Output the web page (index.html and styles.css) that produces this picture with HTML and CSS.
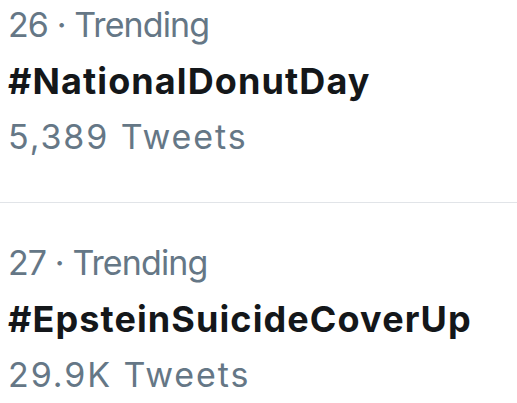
FILE: index.html
```html
<!DOCTYPE html>
<html>
<head>
<meta charset="utf-8">
<link rel="stylesheet" href="styles.css">
</head>
<body>
<div class="list">
  <div class="trend first">
    <div class="meta">26 · Trending</div>
    <div class="tag">#NationalDonutDay</div>
    <div class="count">5,389 Tweets</div>
  </div>
  <div class="divider"></div>
  <div class="trend">
    <div class="meta">27 · Trending</div>
    <div class="tag">#EpsteinSuicideCoverUp</div>
    <div class="count">29.9K Tweets</div>
  </div>
</div>
</body>
</html>
```
FILE: styles.css
```css
html, body {
  margin: 0;
  padding: 0;
  background: #ffffff;
}
body {
  font-family: Inter, "Liberation Sans", sans-serif;
  width: 517px;
  height: 403px;
  overflow: hidden;
}
.list {
  display: flex;
  flex-direction: column;
}
.trend {
  padding: 0 0 0 8px;
  display: flex;
  flex-direction: column;
}
.trend.first {
  margin-top: -3px;
}
.meta, .tag, .count {
  font-size: 34px;
  line-height: 56px;
  white-space: nowrap;
}
.meta {
  color: #657786;
  letter-spacing: -0.9px;
}
.count {
  color: #657786;
  letter-spacing: 1.9px;
}
.tag {
  color: #14171a;
  font-weight: 700;
  font-size: 36px;
  letter-spacing: 1.1px;
}
.divider {
  height: 1px;
  background: #e1e4e8;
  margin: 37px 0 32px 0;
}
```
